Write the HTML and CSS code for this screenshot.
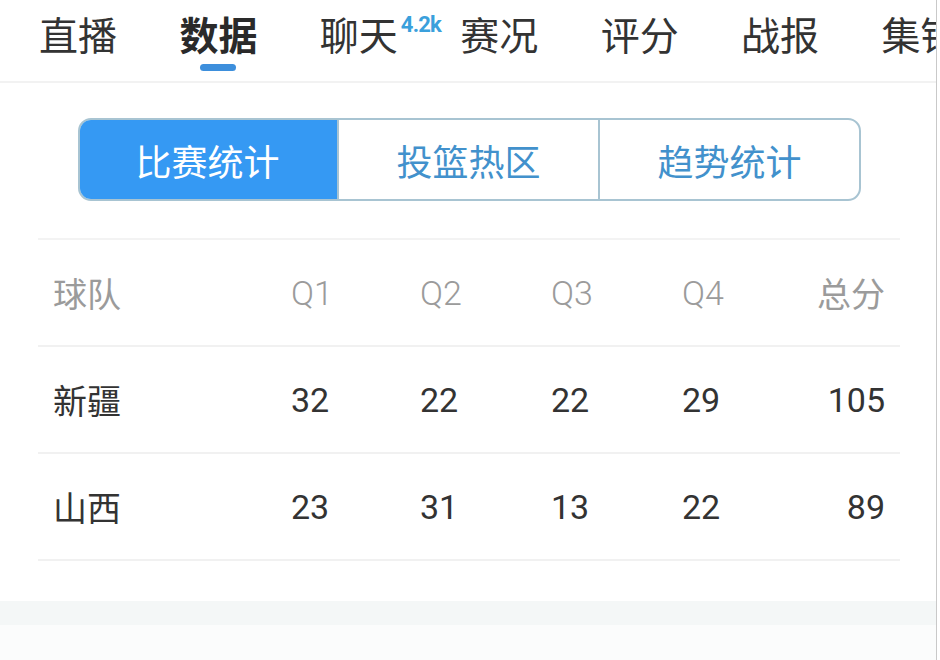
FILE: index.html
```html
<!DOCTYPE html>
<html lang="zh-CN">
<head>
<meta charset="utf-8">
<title>数据</title>
<link rel="stylesheet" href="styles.css">
</head>
<body>
<div class="page">
  <nav class="tabbar">
    <div class="tab"><span class="tab-label">直播</span></div>
    <div class="tab active"><span class="tab-label">数据</span><span class="indicator"></span></div>
    <div class="tab has-badge"><span class="tab-label">聊天</span><span class="badge">4.2k</span></div>
    <div class="tab"><span class="tab-label">赛况</span></div>
    <div class="tab"><span class="tab-label">评分</span></div>
    <div class="tab"><span class="tab-label">战报</span></div>
    <div class="tab"><span class="tab-label">集锦</span></div>
  </nav>

  <div class="segmented">
    <div class="seg seg-active">比赛统计</div>
    <div class="seg">投篮热区</div>
    <div class="seg">趋势统计</div>
  </div>

  <div class="table">
    <div class="row head">
      <span class="team">球队</span><span>Q1</span><span>Q2</span><span>Q3</span><span>Q4</span><span class="total">总分</span>
    </div>
    <div class="row">
      <span class="team">新疆</span><span>32</span><span>22</span><span>22</span><span>29</span><span class="total">105</span>
    </div>
    <div class="row">
      <span class="team">山西</span><span>23</span><span>31</span><span>13</span><span>22</span><span class="total">89</span>
    </div>
  </div>

  <div class="band"></div>
  <div class="rest"></div>
</div>
</body>
</html>
```

FILE: styles.css
```css
html, body {
  margin: 0;
  padding: 0;
  background: #ffffff;
}

body {
  width: 940px;
  height: 660px;
  overflow: hidden;
  font-family: "Noto Sans CJK SC", "Noto Sans", Roboto, sans-serif;
}

.page {
  width: 936px;
  height: 660px;
  border-right: 1px solid #c9c9c9;
  overflow: hidden;
  background: #ffffff;
}

/* top tab bar */
.tabbar {
  display: flex;
  gap: 62.4px;
  padding-left: 39px;
  height: 83px;
  border-bottom: 2px solid #f2f2f2;
  box-sizing: border-box;
  white-space: nowrap;
  overflow: hidden;
}

.tab {
  position: relative;
  flex: 0 0 auto;
  display: flex;
  flex-direction: column;
  align-items: center;
  padding-top: 10px;
}

.tab-label {
  font-size: 39px;
  line-height: 46px;
  color: #333333;
}

.tab.active .tab-label {
  font-weight: 700;
  color: #2a2a2a;
}

.indicator {
  display: block;
  width: 36px;
  height: 7px;
  margin-top: 8px;
  border-radius: 4px;
  background: #3d8fdc;
}

.badge {
  position: absolute;
  left: 81px;
  top: 12px;
  font-family: Roboto, "Noto Sans", sans-serif;
  font-weight: 700;
  font-size: 22px;
  line-height: 26px;
  letter-spacing: -0.8px;
  color: #3aa0dc;
}

/* segmented control */
.segmented {
  display: flex;
  margin: 35px 0 0 78px;
  width: 783px;
  height: 83px;
  box-sizing: border-box;
  border: 2px solid #a8c4d2;
  border-radius: 13px;
  overflow: hidden;
}

.seg {
  flex: 1 1 0;
  display: flex;
  align-items: center;
  justify-content: center;
  font-size: 36px;
  color: #4291cc;
}

.seg + .seg {
  border-left: 2px solid #a8c4d2;
}

.seg-active {
  background: #3599f3;
  color: #ffffff;
  margin: -2px 0 -2px -2px;
}

/* score table */
.table {
  margin: 37px 0 0 38px;
  width: 862px;
  border-top: 2px solid #f3f3f3;
}

.row {
  display: grid;
  grid-template-columns: 238px 129px 131px 131px 131px 1fr;
  align-items: center;
  height: 107px;
  box-sizing: border-box;
  padding: 0 15px;
  border-bottom: 2px solid #f1f1f1;
  font-family: Roboto, "Noto Sans CJK SC", sans-serif;
  font-size: 34px;
  color: #333333;
}

.row .team {
  font-family: "Noto Sans CJK SC", sans-serif;
}

.row .total {
  justify-self: end;
}

.row.head {
  color: #9b9b9b;
}

.row.head span:not(.team):not(.total) {
  font-weight: 300;
}

.row.head .total {
  font-family: "Noto Sans CJK SC", sans-serif;
}

.band {
  margin-top: 40px;
  height: 24px;
  background: #f4f7f7;
}

.rest {
  height: 40px;
  background: #fbfcfc;
}
```
